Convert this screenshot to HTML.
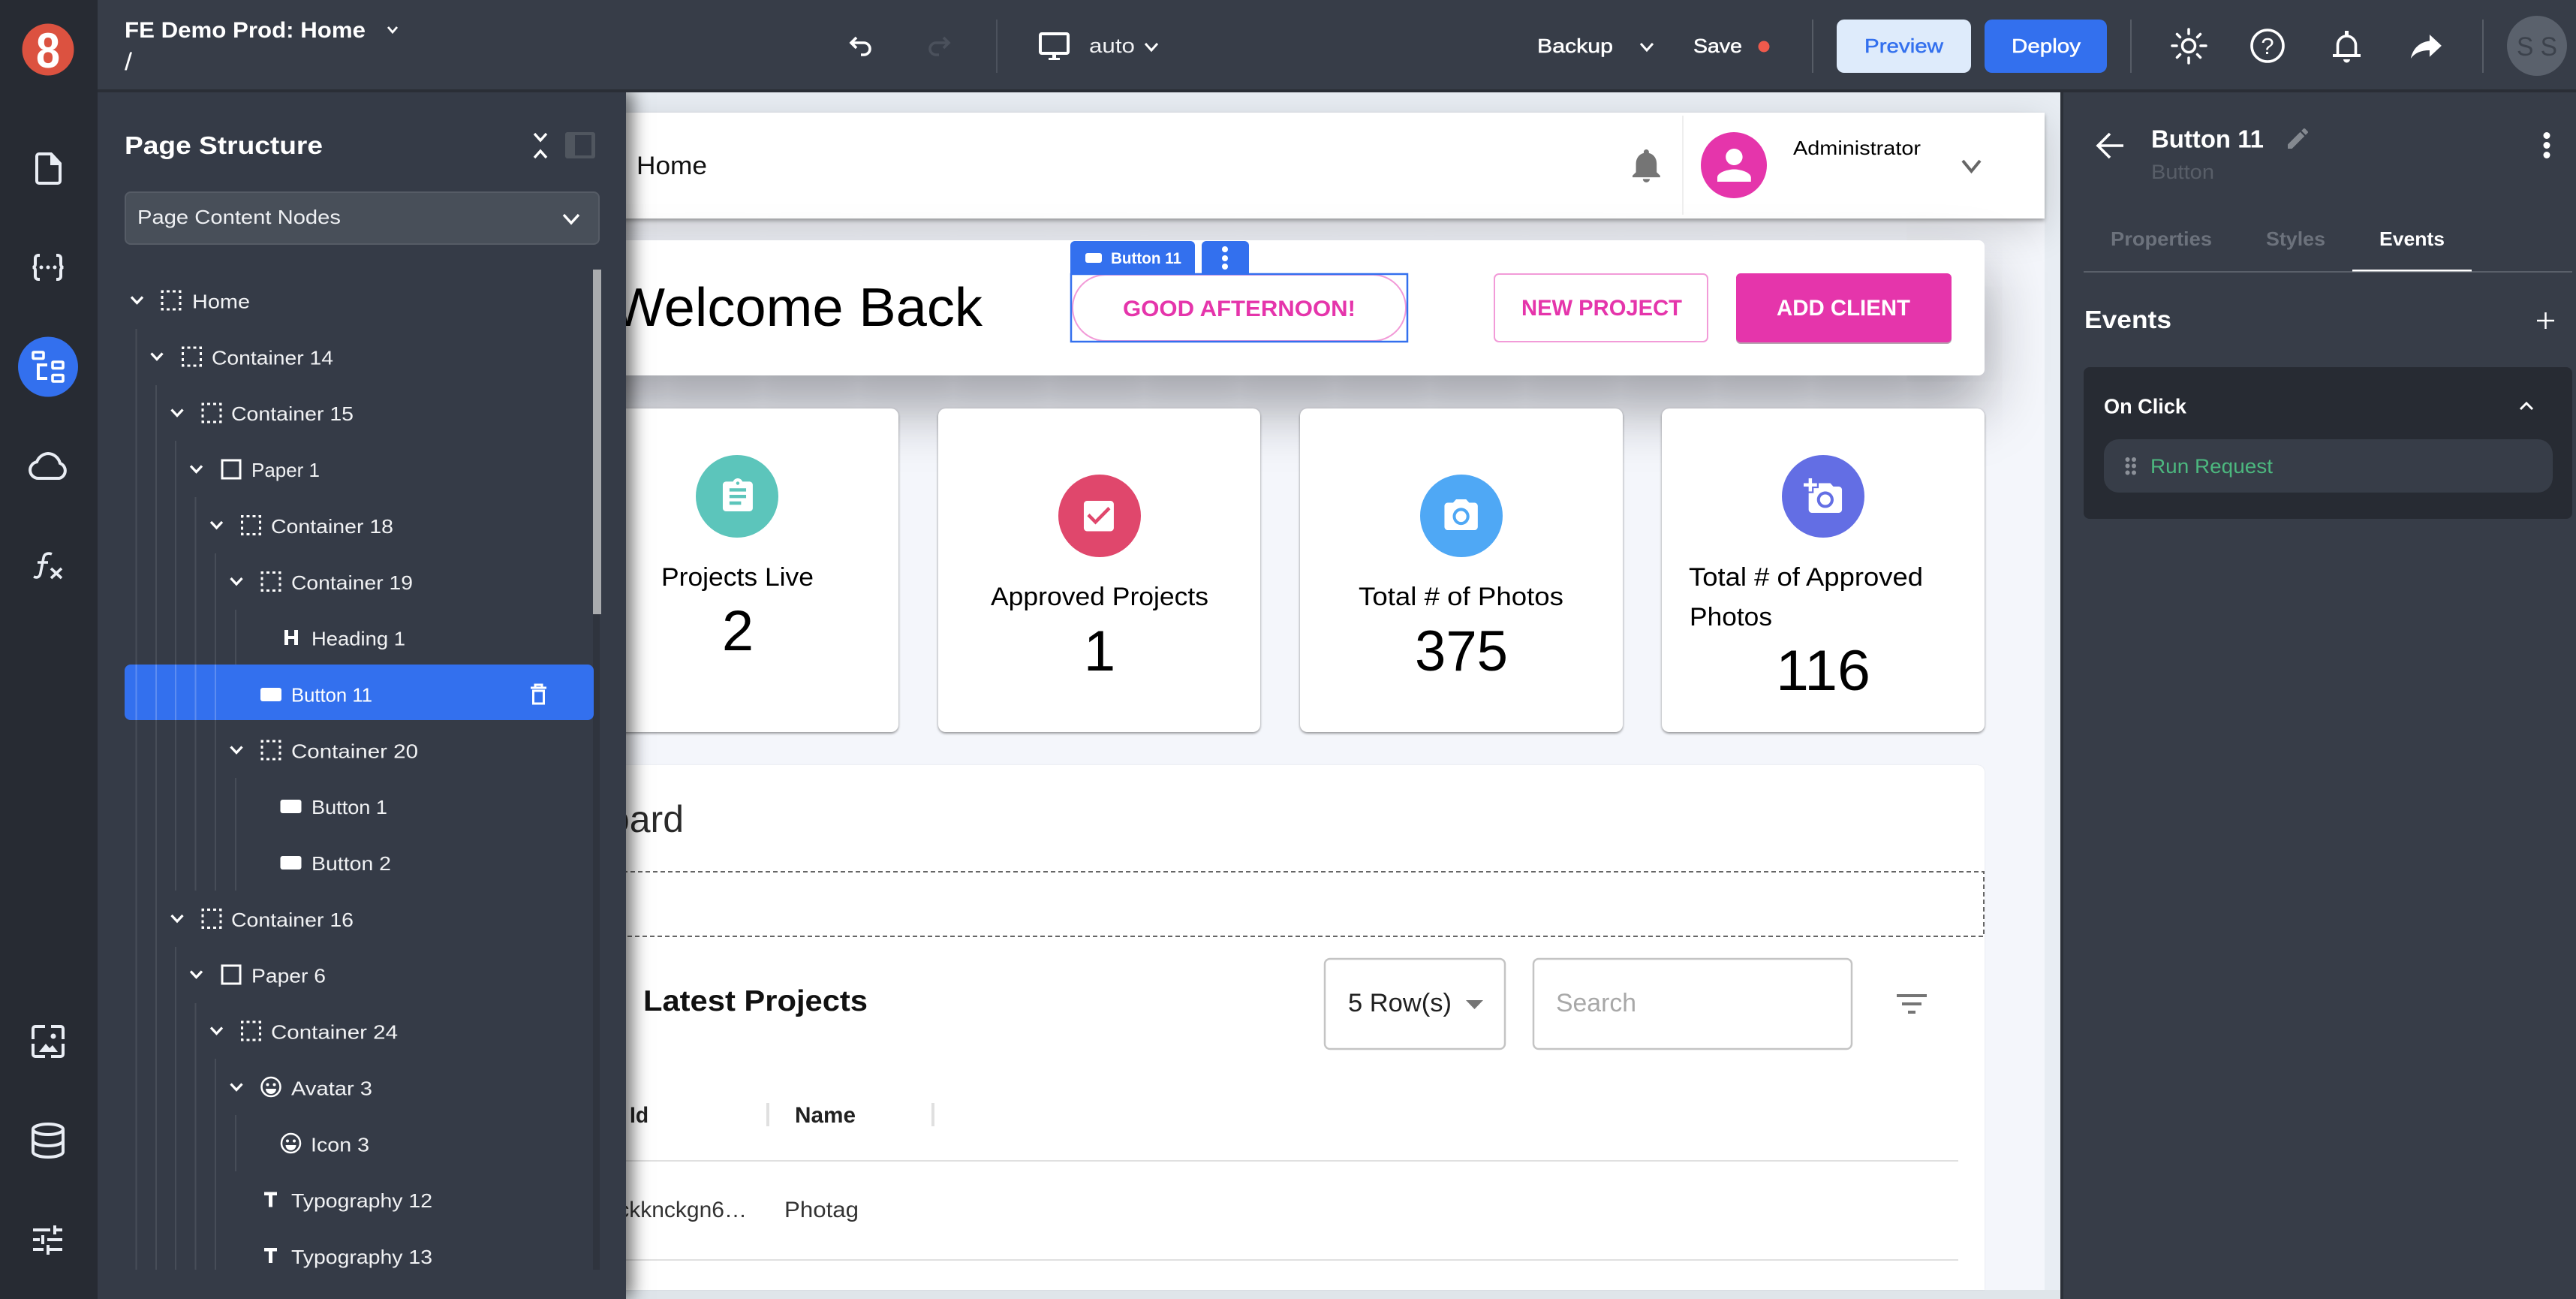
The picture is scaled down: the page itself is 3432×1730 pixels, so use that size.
<!DOCTYPE html>
<html><head><meta charset="utf-8"><title>FE Demo Prod: Home</title>
<style>
html,body{margin:0;padding:0;width:3432px;height:1730px;overflow:hidden;background:#e8edf3}
div,svg{position:absolute;box-sizing:border-box}
svg{left:0;top:0;overflow:visible}
text{font-family:"Liberation Sans",sans-serif}
.s{fill:none;stroke:#e9edf4;stroke-width:4}
.w{fill:none;stroke:#fff;stroke-width:3.5;stroke-linecap:round;stroke-linejoin:round}
</style></head>
<body>
<!-- canvas -->
<div style="left:834px;top:123px;width:1912px;height:1607px;background:#e8edf3"></div>
<div style="left:700px;top:291px;width:2024px;height:1427px;background:#f4f6fb"></div>
<div style="left:700px;top:1718px;width:2046px;height:12px;background:#dfe5ea"></div>
<div style="left:700px;top:150px;width:2024px;height:141px;background:#fff;box-shadow:0 3px 5px rgba(0,0,0,.3),0 14px 50px rgba(0,0,0,.16)"></div>
<div style="left:700px;top:320px;width:1944px;height:180px;background:#fff;border-radius:8px;box-shadow:0 40px 80px rgba(20,20,30,.4)"></div>
<div style="left:767px;top:544px;width:430px;height:431px;background:#fff;border-radius:10px;box-shadow:0 2px 3px rgba(0,0,0,.35),0 0 3px rgba(0,0,0,.1)"></div>
<div style="left:1250px;top:544px;width:429px;height:431px;background:#fff;border-radius:10px;box-shadow:0 2px 3px rgba(0,0,0,.35),0 0 3px rgba(0,0,0,.1)"></div>
<div style="left:1732px;top:544px;width:430px;height:431px;background:#fff;border-radius:10px;box-shadow:0 2px 3px rgba(0,0,0,.35),0 0 3px rgba(0,0,0,.1)"></div>
<div style="left:2214px;top:544px;width:430px;height:431px;background:#fff;border-radius:10px;box-shadow:0 2px 3px rgba(0,0,0,.35),0 0 3px rgba(0,0,0,.1)"></div>
<div style="left:700px;top:1019px;width:1944px;height:699px;background:#fff;border-radius:10px 10px 0 0;box-shadow:0 0 2px rgba(0,0,0,.08)"></div>

<svg width="3432" height="1730" viewBox="0 0 3432 1730">
<!-- appbar -->
<text x="848" y="232" font-size="34" fill="#111" textLength="94" lengthAdjust="spacingAndGlyphs">Home</text>
<path transform="translate(2165.8,193.4) scale(2.3,2.25)" fill="#757575" d="M12 22c1.1 0 2-.9 2-2h-4c0 1.1.9 2 2 2zm6-6v-5c0-3.07-1.63-5.64-4.5-6.32V4c0-.83-.67-1.5-1.5-1.5s-1.5.67-1.5 1.5v.68C7.64 5.36 6 7.92 6 11v5l-2 2v1h16v-1l-2-2z"/>
<rect x="2241" y="154" width="2" height="132" fill="#eee"/>
<circle cx="2310" cy="220" r="44" fill="#e535ab"/>
<path transform="translate(2276.8,187) scale(2.8,2.75)" fill="#fff" d="M12 12c2.21 0 4-1.79 4-4s-1.79-4-4-4-4 1.79-4 4 1.79 4 4 4zm0 2c-2.67 0-8 1.34-8 4v2h16v-2c0-2.66-5.33-4-8-4z"/>
<text x="2389" y="206" font-size="26" fill="#000" textLength="170" lengthAdjust="spacingAndGlyphs">Administrator</text>
<path d="M2615 214l11.5 14 11.5-14" fill="none" stroke="#666" stroke-width="4"/>
<!-- welcome card -->
<text x="816" y="434" font-size="72" fill="#000" textLength="493" lengthAdjust="spacingAndGlyphs">Welcome Back</text>
<path d="M1426 364v-37a6 6 0 0 1 6-6h154a6 6 0 0 1 6 6v37z" fill="#3370ee"/>
<rect x="1446" y="337" width="22" height="13" rx="3" fill="#fff"/>
<text x="1480" y="351" font-size="21" font-weight="bold" fill="#fff" textLength="94" lengthAdjust="spacingAndGlyphs">Button 11</text>
<path d="M1601 364v-37a6 6 0 0 1 6-6h51a6 6 0 0 1 6 6v37z" fill="#3370ee"/>
<circle cx="1632" cy="332" r="4" fill="#fff"/><circle cx="1632" cy="344" r="4" fill="#fff"/><circle cx="1632" cy="355" r="4" fill="#fff"/>
<rect x="1429" y="366" width="444" height="88" rx="44" fill="#fff" stroke="#f29bd8" stroke-width="2"/>
<rect x="1427" y="365" width="448" height="90" fill="none" stroke="#3370ee" stroke-width="2.5"/>
<text x="1496" y="421" font-size="30" font-weight="bold" fill="#e535ab" textLength="310" lengthAdjust="spacingAndGlyphs">GOOD AFTERNOON!</text>
<rect x="1991" y="365" width="284" height="90" rx="6" fill="#fff" stroke="#f29bd8" stroke-width="2"/>
<text x="2027" y="420" font-size="30" font-weight="bold" fill="#e535ab" textLength="214" lengthAdjust="spacingAndGlyphs">NEW PROJECT</text>
<rect x="2313" y="368" width="287" height="90" rx="6" fill="#7a5a70" opacity=".55"/>
<rect x="2313" y="364" width="287" height="92" rx="6" fill="#e535ab"/>
<text x="2367" y="420" font-size="30" font-weight="bold" fill="#fff" textLength="178" lengthAdjust="spacingAndGlyphs">ADD CLIENT</text>
<!-- stat cards -->
<circle cx="982" cy="661" r="55" fill="#5cc5bb"/>
<path transform="translate(956.3,634.8) scale(2.22,2.2)" fill="#fff" d="M19 3h-4.18C14.4 1.84 13.3 1 12 1c-1.3 0-2.4.84-2.82 2H5c-1.1 0-2 .9-2 2v14c0 1.1.9 2 2 2h14c1.1 0 2-.9 2-2V5c0-1.1-.9-2-2-2zm-7 0c.55 0 1 .45 1 1s-.45 1-1 1-1-.45-1-1 .45-1 1-1zm2 14H7v-2h7v2zm3-4H7v-2h10v2zm0-4H7V7h10v2z"/>
<text x="881" y="780" font-size="34" fill="#000" textLength="203" lengthAdjust="spacingAndGlyphs">Projects Live</text>
<text x="983" y="866" font-size="76" fill="#000" text-anchor="middle">2</text>
<circle cx="1465" cy="687" r="55" fill="#e0476c"/>
<path transform="translate(1437.3,660.2) scale(2.22,2.25)" fill="#fff" d="M19 3H5c-1.11 0-2 .9-2 2v14c0 1.1.89 2 2 2h14c1.11 0 2-.9 2-2V5c0-1.1-.89-2-2-2zm-9 14l-5-5 1.41-1.41L10 14.17l7.59-7.59L19 8l-9 9z"/>
<text x="1320" y="806" font-size="34" fill="#000" textLength="290" lengthAdjust="spacingAndGlyphs">Approved Projects</text>
<text x="1465" y="893" font-size="76" fill="#000" text-anchor="middle">1</text>
<circle cx="1947" cy="687" r="55" fill="#4fa8f5"/>
<path transform="translate(1920,660.4) scale(2.22,2.28)" fill="#fff" d="M9 2L7.17 4H4c-1.1 0-2 .9-2 2v12c0 1.1.9 2 2 2h16c1.1 0 2-.9 2-2V6c0-1.1-.9-2-2-2h-3.17L15 2H9zm3 15c-2.76 0-5-2.24-5-5s2.24-5 5-5 5 2.24 5 5-2.24 5-5 5z"/>
<ellipse cx="1946.6" cy="687.8" rx="7.1" ry="7.3" fill="#fff"/>
<text x="1810" y="806" font-size="34" fill="#000" textLength="273" lengthAdjust="spacingAndGlyphs">Total # of Photos</text>
<text x="1885" y="893" font-size="76" fill="#000" textLength="124" lengthAdjust="spacingAndGlyphs">375</text>
<circle cx="2429" cy="661" r="55" fill="#636ee4"/>
<path transform="translate(2403,634.8) scale(2.22,2.19)" fill="#fff" d="M3 4V1h2v3h3v2H5v3H3V6H0V4h3zm3 6V7h3V4h7l1.83 2H21c1.1 0 2 .9 2 2v12c0 1.1-.9 2-2 2H5c-1.1 0-2-.9-2-2V10h3zm7 9c2.76 0 5-2.24 5-5s-2.24-5-5-5-5 2.24-5 5 2.24 5 5 5zm-3.2-5c0 1.77 1.43 3.2 3.2 3.2s3.2-1.43 3.2-3.2-1.43-3.2-3.2-3.2-3.2 1.43-3.2 3.2z"/>
<text x="2250" y="780" font-size="34" fill="#000" textLength="312" lengthAdjust="spacingAndGlyphs">Total # of Approved</text>
<text x="2251" y="833" font-size="34" fill="#000" textLength="110" lengthAdjust="spacingAndGlyphs">Photos</text>
<text x="2366" y="919" font-size="76" fill="#000" textLength="126" lengthAdjust="spacingAndGlyphs">116</text>
<!-- dashboard -->
<text x="911" y="1108" font-size="50" fill="#2a2a2a" text-anchor="end">Dashboard</text>
<rect x="700" y="1161" width="1943" height="86" fill="none" stroke="#666" stroke-width="2" stroke-dasharray="6 4"/>
<text x="857" y="1346" font-size="39" font-weight="bold" fill="#111" textLength="299" lengthAdjust="spacingAndGlyphs">Latest Projects</text>
<rect x="1765" y="1277" width="240" height="120" rx="7" fill="#fff" stroke="#c4c4c4" stroke-width="2.5"/>
<text x="1796" y="1347" font-size="34" fill="#212121" textLength="138" lengthAdjust="spacingAndGlyphs">5 Row(s)</text>
<path d="M1953 1332h23l-11.5 12z" fill="#757575"/>
<rect x="2043" y="1277" width="424" height="120" rx="7" fill="#fff" stroke="#c4c4c4" stroke-width="2.5"/>
<text x="2073" y="1347" font-size="34" fill="#a8a8a8" textLength="107" lengthAdjust="spacingAndGlyphs">Search</text>
<rect x="2527" y="1324" width="40" height="4" fill="#757575"/><rect x="2534" y="1335" width="26" height="4" fill="#757575"/><rect x="2542" y="1346" width="10" height="4" fill="#757575"/>
<text x="839" y="1495" font-size="30" font-weight="bold" fill="#212121" textLength="25" lengthAdjust="spacingAndGlyphs">Id</text>
<text x="1059" y="1495" font-size="30" font-weight="bold" fill="#212121" textLength="81" lengthAdjust="spacingAndGlyphs">Name</text>
<rect x="1021" y="1469" width="4" height="31" fill="#e0e0e0"/><rect x="1241" y="1469" width="4" height="31" fill="#e0e0e0"/>
<rect x="700" y="1545" width="1909" height="2" fill="#e0e0e0"/><rect x="700" y="1677" width="1909" height="2" fill="#e0e0e0"/>
<text x="995" y="1621" font-size="30" fill="#333" text-anchor="end">ckknckgn6…</text>
<text x="1045" y="1621" font-size="30" fill="#333" textLength="99" lengthAdjust="spacingAndGlyphs">Photag</text>
</svg>

<!-- chrome panels -->
<div style="left:130px;top:120px;width:704px;height:1610px;background:#353b47;box-shadow:8px 0 22px rgba(0,0,0,.58)"></div>
<div style="left:2745px;top:120px;width:687px;height:1610px;background:#373d48;border-left:4px solid #2b3038"></div>
<div style="left:130px;top:0;width:3302px;height:119px;background:#373d48"></div>
<div style="left:130px;top:119px;width:3302px;height:4px;background:#2a2e36"></div>
<div style="left:0;top:0;width:130px;height:1730px;background:#272b33"></div>

<svg width="3432" height="1730" viewBox="0 0 3432 1730">
<defs>
<path id="c" d="M-7.5 -4.5L0 3.5L7.5 -4.5" fill="none" stroke="#fff" stroke-width="3.2"/>
<rect id="d" x="-12" y="-12" width="24" height="24" fill="none" stroke="#fff" stroke-width="3" stroke-dasharray="4 4" stroke-dashoffset="2"/>
<rect id="p" x="-12" y="-12" width="24" height="24" fill="none" stroke="#fff" stroke-width="3"/>
<rect id="b" x="-14" y="-9" width="28" height="18" rx="3" fill="#fff"/>
<g id="m"><circle r="12.5" fill="none" stroke="#fff" stroke-width="2.5"/><circle cx="-4.5" cy="-3" r="2" fill="#fff"/><circle cx="4.5" cy="-3" r="2" fill="#fff"/><path d="M-7 2.5h14a7 7 0 0 1-14 0z" fill="#fff"/></g>
<path id="t" d="M-8.5 -10h17v4.5h-6v15.5h-5v-15.5h-6z" fill="#fff"/>
</defs>
<!-- rail -->
<circle cx="64" cy="66" r="34.5" fill="#dc5240"/>
<text x="48" y="90" font-size="66" font-weight="bold" fill="#fff" textLength="32" lengthAdjust="spacingAndGlyphs">8</text>
<path class="s" d="M49 208a3 3 0 0 1 3-3h16l12 13v23a3 3 0 0 1-3 3H52a3 3 0 0 1-3-3z"/><path d="M67 204h3l12 13v3H67z" fill="#e9edf4"/>
<path class="s" d="M53 340h-2a4 4 0 0 0-4 4v8a4 4 0 0 1-3 4 4 4 0 0 1 3 4v8a4 4 0 0 0 4 4h2M75 340h2a4 4 0 0 1 4 4v8a4 4 0 0 0 3 4 4 4 0 0 0-3 4v8a4 4 0 0 1-4 4h-2"/>
<circle cx="55" cy="356" r="2.5" fill="#e9edf4"/><circle cx="64" cy="356" r="2.5" fill="#e9edf4"/><circle cx="73" cy="356" r="2.5" fill="#e9edf4"/>
<circle cx="64" cy="488.5" r="40" fill="#3370ee"/>
<g fill="none" stroke="#fff" stroke-width="3.6"><rect x="44" y="469" width="14" height="8.5" rx="1"/><rect x="70" y="482" width="14" height="8.5" rx="1"/><rect x="70" y="499.5" width="14" height="8.5" rx="1"/><path d="M63 486H51V504H63" stroke-width="4"/></g>
<path class="s" d="M51 637a11 11 0 0 1-2-21.8A17 17 0 0 1 64 604a17 17 0 0 1 16 13a10.5 10.5 0 0 1-1 20z"/>
<path d="M69 738c-4-2-10-1-11 5l-4 20c-1 6-5 7-9 5M50 749h14M68 757l14 13M82 757l-14 13" fill="none" stroke="#e9edf4" stroke-width="3.6"/>
<path class="s" d="M60 1367H47a3 3 0 0 0-3 3V1384M68 1367H81a3 3 0 0 1 3 3V1384M44 1390v14a3 3 0 0 0 3 3h13M84 1390v14a3 3 0 0 1-3 3H68"/>
<circle cx="71" cy="1380" r="3.5" fill="#e9edf4"/><path d="M52 1401l9-11 5 6 4-4 7 9z" fill="#e9edf4"/>
<ellipse class="s" cx="64" cy="1504" rx="20" ry="7"/><path class="s" d="M44 1504v30a20 7 0 0 0 40 0v-30M44 1519a20 7 0 0 0 40 0"/>
<path class="s" d="M44 1638H67M73 1638H83M73 1632V1644M44 1651H53M57 1645V1657M63 1651H83M44 1664H58M64 1658V1671M64 1664H83"/>
<!-- top bar -->
<text x="166" y="50" font-size="30" font-weight="bold" fill="#fff" textLength="321" lengthAdjust="spacingAndGlyphs">FE Demo Prod: Home</text>
<path d="M517 36l6 7 6-7" fill="none" stroke="#fff" stroke-width="2.8"/>
<text x="166" y="93" font-size="32" fill="#fff" textLength="10" lengthAdjust="spacingAndGlyphs">/</text>
<path d="M1141 50l-7 7 7 7M1134 57h17a8 8 0 0 1 0 16h-4" fill="none" stroke="#fff" stroke-width="3.6"/>
<path d="M1257 50l7 7-7 7M1264 57h-17a8 8 0 0 0 0 16h4" fill="none" stroke="#4b515c" stroke-width="3.6"/>
<rect x="1327" y="26" width="2" height="71" fill="#4c525d"/>
<rect x="1386" y="45" width="37" height="26" rx="2" fill="none" stroke="#fff" stroke-width="4"/>
<path d="M1402 72h5v5h5v3h-15v-3h5z" fill="#fff"/>
<text x="1451" y="70" font-size="27" fill="#f0f1f3" textLength="61" lengthAdjust="spacingAndGlyphs">auto</text>
<path d="M1526 58l8 9 8-9" fill="none" stroke="#fff" stroke-width="3"/>
<text x="2048" y="70" font-size="26" fill="#fff" stroke="#fff" stroke-width=".5" textLength="101" lengthAdjust="spacingAndGlyphs">Backup</text>
<path d="M2186 58l8 9 8-9" fill="none" stroke="#fff" stroke-width="3"/>
<text x="2256" y="70" font-size="26" fill="#fff" stroke="#fff" stroke-width=".5" textLength="65" lengthAdjust="spacingAndGlyphs">Save</text>
<circle cx="2350" cy="62" r="7.5" fill="#ef5a4c"/>
<rect x="2414" y="26" width="2" height="71" fill="#565c66"/>
<rect x="2447" y="26" width="179" height="71" rx="10" fill="#deebfb"/>
<text x="2484" y="70" font-size="26" fill="#3370ee" stroke="#3370ee" stroke-width=".5" textLength="105" lengthAdjust="spacingAndGlyphs">Preview</text>
<rect x="2644" y="26" width="163" height="71" rx="10" fill="#3370ee"/>
<text x="2680" y="70" font-size="26" fill="#fff" stroke="#fff" stroke-width=".5" textLength="92" lengthAdjust="spacingAndGlyphs">Deploy</text>
<rect x="2838" y="26" width="2" height="71" fill="#565c66"/>
<circle cx="2916" cy="61" r="8.5" fill="none" stroke="#fff" stroke-width="3.5"/>
<path class="w" d="M2916 39v6M2916 77v7M2894 61h6M2932 61h7M2900.5 45.500l4 4M2927.500 72.500l4 4M2931.500 45.500l-4 4M2904.500 72.500l-4 4"/>
<circle cx="3021" cy="61" r="21" fill="none" stroke="#fff" stroke-width="3.6"/>
<text x="3021" y="72" font-size="31" fill="#fff" text-anchor="middle">?</text>
<path d="M3114.500 73V60a12 12 0 0 1 24 0V73" fill="none" stroke="#fff" stroke-width="3.6"/>
<path d="M3108 72h37v4h-37zM3122 79h9a4.500 4.500 0 0 1-9 0zM3124 41h5v8h-5z" fill="#fff"/>
<path transform="translate(3205,35.3) scale(2.28,2.13)" fill="#fff" d="M14 9V5l7 7-7 7v-4.100c-5 0-8.500 1.600-11 5.100 1-5 4-10 11-11z"/>
<rect x="3307" y="26" width="2" height="71" fill="#565c66"/>
<circle cx="3380" cy="61" r="40" fill="#5a616c"/>
<text x="3353" y="74" font-size="35" fill="#3c424c" textLength="54" lengthAdjust="spacingAndGlyphs">S S</text>

<!-- left panel head -->
<text x="166" y="205" font-size="33" font-weight="bold" fill="#fff" textLength="264" lengthAdjust="spacingAndGlyphs">Page Structure</text>
<path d="M712 178l8 9 8-9M712 210l8-9 8 9" fill="none" stroke="#fff" stroke-width="3.4"/>
<rect x="753" y="176" width="40" height="35" rx="3" fill="#50565f"/><rect x="766" y="180" width="22" height="27" fill="#353b47"/>
<rect x="167" y="256" width="631" height="69" rx="7" fill="#484f59" stroke="#565c66" stroke-width="2"/>
<text x="183" y="298" font-size="26" fill="#eef0f3" textLength="271" lengthAdjust="spacingAndGlyphs">Page Content Nodes</text>
<path d="M751 286l10 11 10-11" fill="none" stroke="#fff" stroke-width="3.4"/>
<!-- scrollbar -->
<rect x="790" y="818" width="9" height="873" fill="#2f343e"/>
<rect x="790" y="359" width="11" height="459" fill="#a9abae"/>
<!-- selected -->
<rect x="166" y="885" width="625" height="74" rx="8" fill="#3370ee"/>
<!-- guides -->
<g fill="#ffffff" opacity=".09">
<rect x="180.500" y="438" width="2" height="1253"/>
<rect x="207" y="513" width="2" height="1178"/>
<rect x="233" y="587" width="2" height="599"/><rect x="233" y="1261" width="2" height="430"/>
<rect x="259.500" y="662" width="2" height="524"/><rect x="259.500" y="1336" width="2" height="355"/>
<rect x="286" y="737" width="2" height="449"/><rect x="286" y="1410" width="2" height="281"/>
<rect x="313" y="812" width="2" height="73"/><rect x="313" y="1036" width="2" height="150"/><rect x="313" y="1485" width="2" height="75"/>
</g>
<g fill="#ffffff" opacity=".12">
<rect x="180.500" y="885" width="2" height="74"/><rect x="207" y="885" width="2" height="74"/><rect x="233" y="885" width="2" height="74"/><rect x="259.500" y="885" width="2" height="74"/><rect x="286" y="885" width="2" height="74"/>
</g>
<!-- tree -->
<g font-size="26" fill="#f1f2f4">
<use href="#c" x="182.500" y="400"/><use href="#d" x="228" y="400"/>
<text x="256" y="410.500" textLength="77" lengthAdjust="spacingAndGlyphs">Home</text>
<use href="#c" x="209" y="475"/><use href="#d" x="255.500" y="475"/>
<text x="282" y="485.400" textLength="162" lengthAdjust="spacingAndGlyphs">Container 14</text>
<use href="#c" x="236" y="550"/><use href="#d" x="282" y="550"/>
<text x="308" y="560.200" textLength="163" lengthAdjust="spacingAndGlyphs">Container 15</text>
<use href="#c" x="261.500" y="625"/><use href="#p" x="308" y="625"/>
<text x="335" y="635" textLength="91" lengthAdjust="spacingAndGlyphs">Paper 1</text>
<use href="#c" x="288.500" y="699.500"/><use href="#d" x="334.500" y="699.500"/>
<text x="361" y="709.900" textLength="163" lengthAdjust="spacingAndGlyphs">Container 18</text>
<use href="#c" x="315" y="774.500"/><use href="#d" x="361" y="774.500"/>
<text x="388" y="784.800" textLength="162" lengthAdjust="spacingAndGlyphs">Container 19</text>
<path transform="translate(388,849)" d="M-9 -10h5v8h8v-8h5v20h-5v-8h-8v8h-5z" fill="#fff"/>
<text x="415" y="859.600" textLength="125" lengthAdjust="spacingAndGlyphs">Heading 1</text>
<use href="#b" x="361" y="925"/>
<text x="388" y="934.500" fill="#fff" textLength="108" lengthAdjust="spacingAndGlyphs">Button 11</text>
<use href="#c" x="315" y="999"/><use href="#d" x="361" y="999"/>
<text x="388" y="1009.300" textLength="169" lengthAdjust="spacingAndGlyphs">Container 20</text>
<use href="#b" x="387.500" y="1074"/>
<text x="415" y="1084.200" textLength="101" lengthAdjust="spacingAndGlyphs">Button 1</text>
<use href="#b" x="387.500" y="1149"/>
<text x="415" y="1159" textLength="106" lengthAdjust="spacingAndGlyphs">Button 2</text>
<use href="#c" x="236" y="1223.500"/><use href="#d" x="282" y="1223.500"/>
<text x="308" y="1233.900" textLength="163" lengthAdjust="spacingAndGlyphs">Container 16</text>
<use href="#c" x="261.500" y="1298"/><use href="#p" x="308" y="1298"/>
<text x="335" y="1308.700" textLength="99" lengthAdjust="spacingAndGlyphs">Paper 6</text>
<use href="#c" x="288.500" y="1373"/><use href="#d" x="334.500" y="1373"/>
<text x="361" y="1383.600" textLength="169" lengthAdjust="spacingAndGlyphs">Container 24</text>
<use href="#c" x="315" y="1448"/><use href="#m" x="361" y="1447.500"/>
<text x="388" y="1458.400" textLength="108" lengthAdjust="spacingAndGlyphs">Avatar 3</text>
<use href="#m" x="387.500" y="1522.500"/>
<text x="414" y="1533.300" textLength="78" lengthAdjust="spacingAndGlyphs">Icon 3</text>
<use href="#t" x="360.500" y="1597.500"/>
<text x="388" y="1608.100" textLength="188" lengthAdjust="spacingAndGlyphs">Typography 12</text>
<use href="#t" x="360.500" y="1672"/>
<text x="388" y="1683" textLength="188" lengthAdjust="spacingAndGlyphs">Typography 13</text>
</g>
<!-- trash -->
<path d="M707 916h21M713 915v-3h9v3" fill="none" stroke="#fff" stroke-width="3"/>
<rect x="710.500" y="920" width="14" height="17" fill="none" stroke="#fff" stroke-width="3"/>

<!-- right panel -->
<path d="M2829 194H2797M2811 178L2795 194L2811 210" fill="none" stroke="#fff" stroke-width="3.6"/>
<text x="2866" y="196.500" font-size="33" font-weight="bold" fill="#fff" textLength="150" lengthAdjust="spacingAndGlyphs">Button 11</text>
<path transform="translate(3043.500,166.500) scale(1.5)" fill="#848990" d="M3 17.250V21h3.750L17.810 9.940l-3.750-3.750L3 17.250zM20.710 7.040c.39-.39.39-1.020 0-1.410l-2.340-2.340c-.39-.39-1.020-.39-1.410 0l-1.830 1.830 3.750 3.750 1.830-1.830z"/>
<text x="2866" y="238" font-size="27" fill="#585e68" textLength="84" lengthAdjust="spacingAndGlyphs">Button</text>
<circle cx="3393" cy="180.500" r="4.500" fill="#fff"/><circle cx="3393" cy="193.500" r="4.500" fill="#fff"/><circle cx="3393" cy="206.500" r="4.500" fill="#fff"/>
<text x="2812" y="327" font-size="26" font-weight="bold" fill="#6c727c" textLength="135" lengthAdjust="spacingAndGlyphs">Properties</text>
<text x="3019" y="327" font-size="26" font-weight="bold" fill="#6c727c" textLength="79" lengthAdjust="spacingAndGlyphs">Styles</text>
<text x="3170" y="327" font-size="26" font-weight="bold" fill="#fff" textLength="87" lengthAdjust="spacingAndGlyphs">Events</text>
<rect x="2776" y="361" width="651" height="2" fill="#5a606a"/>
<rect x="3134" y="359" width="159" height="2.500" fill="#fff"/>
<text x="2777" y="437" font-size="33" font-weight="bold" fill="#fff" textLength="116" lengthAdjust="spacingAndGlyphs">Events</text>
<path d="M3380 427h23M3391.500 416v22" fill="none" stroke="#fff" stroke-width="2.500"/>
<rect x="2776" y="489" width="651" height="202" rx="8" fill="#272b33"/>
<text x="2803" y="550.500" font-size="28" font-weight="bold" fill="#fff" textLength="110" lengthAdjust="spacingAndGlyphs">On Click</text>
<path d="M3358 545l8-8 8 8" fill="none" stroke="#fff" stroke-width="3"/>
<rect x="2803" y="585" width="598" height="71" rx="20" fill="#373d48"/>
<g fill="#8c9199"><circle cx="2834.500" cy="612" r="3"/><circle cx="2843" cy="612" r="3"/><circle cx="2834.500" cy="620.500" r="3"/><circle cx="2843" cy="620.500" r="3"/><circle cx="2834.500" cy="629.500" r="3"/><circle cx="2843" cy="629.500" r="3"/></g>
<text x="2865" y="630" font-size="27" fill="#4cb87f" textLength="163" lengthAdjust="spacingAndGlyphs">Run Request</text>
</svg>
</body></html>
